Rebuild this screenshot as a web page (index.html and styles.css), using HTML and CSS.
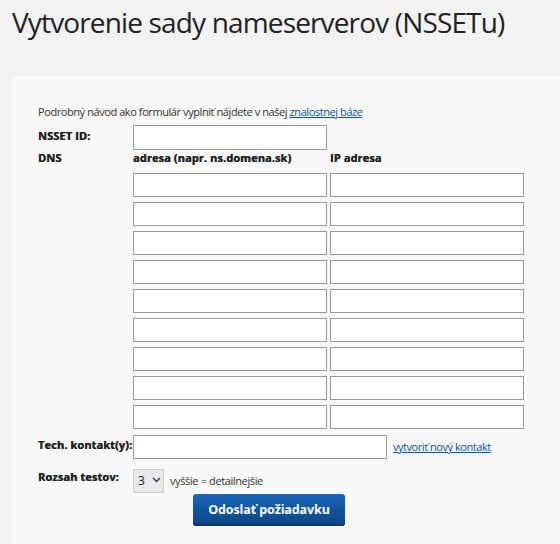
FILE: index.html
```html
<!DOCTYPE html>
<html lang="sk">
<head>
<meta charset="utf-8">
<title>Vytvorenie sady nameserverov (NSSETu)</title>
<link rel="stylesheet" href="styles.css">
</head>
<body>
<h1 class="title">Vytvorenie sady nameserverov (NSSETu)</h1>
<div class="panel">
  <p class="intro">Podrobný návod ako formulár vyplniť nájdete v našej <a href="#" class="link">znalostnej báze</a></p>
  <div class="row row-id">
    <label class="label">NSSET ID:</label>
    <input class="field field-id" type="text">
  </div>
  <div class="row row-head">
    <span class="label">DNS</span>
    <span class="col-head col-name">adresa (napr. ns.domena.sk)</span>
    <span class="col-head">IP adresa</span>
  </div>
  <div class="dns-list">
    <div class="dns-row"><input class="field field-dns" type="text"><input class="field field-dns" type="text"></div>
    <div class="dns-row"><input class="field field-dns" type="text"><input class="field field-dns" type="text"></div>
    <div class="dns-row"><input class="field field-dns" type="text"><input class="field field-dns" type="text"></div>
    <div class="dns-row"><input class="field field-dns" type="text"><input class="field field-dns" type="text"></div>
    <div class="dns-row"><input class="field field-dns" type="text"><input class="field field-dns" type="text"></div>
    <div class="dns-row"><input class="field field-dns" type="text"><input class="field field-dns" type="text"></div>
    <div class="dns-row"><input class="field field-dns" type="text"><input class="field field-dns" type="text"></div>
    <div class="dns-row"><input class="field field-dns" type="text"><input class="field field-dns" type="text"></div>
    <div class="dns-row"><input class="field field-dns" type="text"><input class="field field-dns" type="text"></div>
  </div>
  <div class="row row-tech">
    <label class="label">Tech. kontakt(y):</label>
    <input class="field field-tech" type="text">
    <a href="#" class="link link-new">vytvoriť nový kontakt</a>
  </div>
  <div class="row row-level">
    <label class="label">Rozsah testov:</label>
    <span class="select-wrap">
      <select class="select">
        <option>1</option><option>2</option><option selected>3</option>
      </select>
      <svg class="chevron" width="9" height="6" viewBox="0 0 9 6"><path d="M1 1l3.5 3.5L8 1" fill="none" stroke="#333" stroke-width="1.3"/></svg>
    </span>
    <span class="hint">vyššie = detailnejšie</span>
  </div>
  <div class="actions">
    <button class="submit" type="button">Odoslať požiadavku</button>
  </div>
</div>
</body>
</html>
```

FILE: styles.css
```css
html, body {
  margin: 0;
  padding: 0;
}
body {
  background: #f2f2f2;
  font-family: "Open Sans", "DejaVu Sans", sans-serif;
  color: #333;
}
.title {
  margin: 0;
  padding: 4px 0 0 12px;
  height: 76px;
  box-sizing: border-box;
  font-size: 28px;
  font-weight: 400;
  line-height: 36px;
  letter-spacing: -0.85px;
  white-space: nowrap;
  color: #222;
}
.panel {
  margin-left: 12px;
  background: #f8f8f8;
  padding: 28px 0 30px 26px;
  min-height: 468px;
  box-sizing: border-box;
}
.intro {
  margin: 0 0 5px;
  font-size: 11px;
  line-height: 16px;
  letter-spacing: -0.42px;
  color: #333;
}
.link {
  color: #0055a5;
  text-decoration: underline;
}
.row {
  display: flex;
  align-items: flex-start;
}
.label {
  width: 95px;
  flex: none;
  font-size: 11px;
  font-weight: 700;
  line-height: 16px;
  letter-spacing: 0.1px;
  color: #222;
  text-shadow: 0.35px 0 0 #222;
  white-space: nowrap;
}
.row-id .label {
  padding-top: 3px;
}
.field {
  box-sizing: border-box;
  border: 1px solid #999;
  background: #fff;
  margin: 0;
  padding: 0 4px;
  height: 24px;
  font: inherit;
}
.field-id {
  width: 194px;
  height: 25px;
}
.row-head {
  height: 16px;
  margin-bottom: 7px;
}
.col-head {
  font-size: 11px;
  font-weight: 700;
  line-height: 16px;
  letter-spacing: 0.1px;
  color: #222;
  text-shadow: 0.35px 0 0 #222;
}
.col-name {
  width: 197px;
}
.dns-list {
  padding-left: 95px;
  display: flex;
  flex-direction: column;
  gap: 5px;
}
.dns-row {
  display: flex;
  gap: 3px;
}
.field-dns {
  width: 194px;
}
.row-tech {
  margin-top: 6px;
}
.row-tech .label {
  padding-top: 2px;
}
.field-tech {
  width: 254px;
}
.link-new {
  margin-left: 6px;
  font-size: 11px;
  line-height: 16px;
  letter-spacing: -0.45px;
  padding-top: 4px;
}
.row-level {
  margin-top: 9px;
}
.row-level .label {
  padding-top: 1px;
}
.select-wrap {
  position: relative;
  display: inline-block;
}
.select {
  appearance: none;
  -webkit-appearance: none;
  box-sizing: border-box;
  width: 31px;
  height: 24px;
  margin: 0;
  border: 1px solid #cfcfcf;
  border-radius: 0;
  background: #e9e9ed;
  font-family: "Open Sans", sans-serif;
  font-size: 12px;
  color: #222;
  padding: 0 0 0 4px;
}
.chevron {
  position: absolute;
  left: 19px;
  top: 9px;
  pointer-events: none;
}
.hint {
  margin-left: 6px;
  font-size: 11px;
  line-height: 16px;
  letter-spacing: -0.38px;
  padding-top: 5px;
  color: #333;
}
.actions {
  padding-left: 155px;
  margin-top: 1px;
}
.submit {
  width: 152px;
  height: 32px;
  border: 0;
  border-radius: 3px;
  background: linear-gradient(#1a66b8, #0b4583);
  box-shadow: inset 0 -2px 0 #093a70;
  color: #fff;
  font-family: "Open Sans", sans-serif;
  font-size: 12.5px;
  font-weight: 700;
  letter-spacing: -0.1px;
  cursor: pointer;
}
```
